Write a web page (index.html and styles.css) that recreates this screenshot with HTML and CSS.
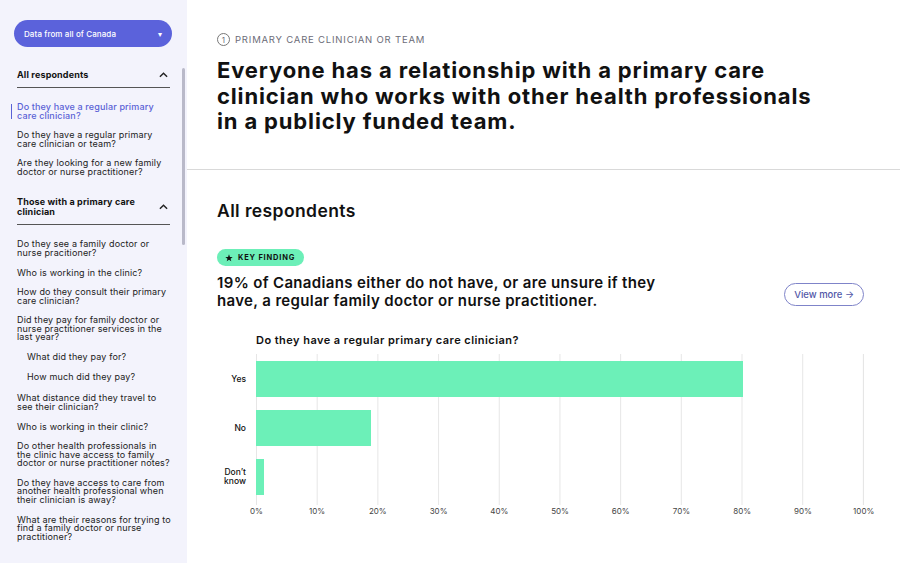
FILE: index.html
```html
<!DOCTYPE html>
<html lang="en">
<head>
    <meta charset="UTF-8">
    <meta name="viewport" content="width=device-width, initial-scale=1.0">
    <title>Primary Care Clinician or Team</title>
    <link rel="stylesheet" href="styles.css">
</head>
<body>
    <div class="layout">
        <aside class="sidebar">
            <button class="region-select">
                <span>Data from all of Canada</span>
                <span class="caret">&#9662;</span>
            </button>

            <nav class="nav">
                <div class="nav-group">
                    <div class="nav-heading">
                        <span>All respondents</span>
                        <svg class="chevron" viewBox="0 0 10 6" width="9" height="6"><path d="M1 5 L5 1 L9 5" fill="none" stroke="#222" stroke-width="1.6"/></svg>
                    </div>
                    <ul>
                        <li class="active">Do they have a regular primary care clinician?</li>
                        <li>Do they have a regular primary care clinician or team?</li>
                        <li>Are they looking for a new family doctor or nurse practitioner?</li>
                    </ul>
                </div>

                <div class="nav-group">
                    <div class="nav-heading">
                        <span>Those with a primary care clinician</span>
                        <svg class="chevron" viewBox="0 0 10 6" width="9" height="6"><path d="M1 5 L5 1 L9 5" fill="none" stroke="#222" stroke-width="1.6"/></svg>
                    </div>
                    <ul>
                        <li>Do they see a family doctor or nurse pracitioner?</li>
                        <li>Who is working in the clinic?</li>
                        <li>How do they consult their primary care clinician?</li>
                        <li>Did they pay for family doctor or nurse practitioner services in the last year?</li>
                        <li class="sub">What did they pay for?</li>
                        <li class="sub last">How much did they pay?</li>
                        <li>What distance did they travel to see their clinician?</li>
                        <li>Who is working in their clinic?</li>
                        <li>Do other health professionals in the clinic have access to family doctor or nurse practitioner notes?</li>
                        <li>Do they have access to care from another health professional when their clinician is away?</li>
                        <li>What are their reasons for trying to find a family doctor or nurse practitioner?</li>
                    </ul>
                </div>
            </nav>
            <div class="scroll-thumb"></div>
        </aside>

        <main class="main">
            <section class="intro">
                <p class="kicker"><span class="step">1</span>PRIMARY CARE CLINICIAN OR TEAM</p>
                <h1>Everyone has a relationship with a primary care clinician who works with other health professionals in a publicly funded team.</h1>
            </section>

            <section class="findings">
                <h2>All respondents</h2>

                <span class="badge">
                    <svg viewBox="0 0 10 10" width="8" height="8"><path d="M5 0.4 L6.2 3.6 L9.6 3.7 L6.9 5.8 L7.9 9.2 L5 7.2 L2.1 9.2 L3.1 5.8 L0.4 3.7 L3.8 3.6 Z" fill="#111"/></svg>
                    KEY FINDING
                </span>

                <div class="finding-row">
                    <p class="finding">19% of Canadians either do not have, or are unsure if they have, a regular family doctor or nurse practitioner.</p>
                    <button class="view-more">View more &#8594;</button>
                </div>

                <div class="chart">
                    <h3>Do they have a regular primary care clinician?</h3>
                    <div class="chart-body">
                        <div class="labels">
                            <span>Yes</span>
                            <span>No</span>
                            <span>Don&rsquo;t<br>know</span>
                        </div>
                        <div class="plot">
                            <div class="bar" style="width: 80.2%"></div>
                            <div class="bar" style="width: 18.9%"></div>
                            <div class="bar" style="width: 1.3%"></div>
                        </div>
                    </div>
                    <div class="axis">
                        <span>0%</span><span>10%</span><span>20%</span><span>30%</span><span>40%</span><span>50%</span>
                        <span>60%</span><span>70%</span><span>80%</span><span>90%</span><span>100%</span>
                    </div>
                </div>
            </section>
        </main>
    </div>
</body>
</html>
```

FILE: styles.css
```css
* {
    box-sizing: border-box;
    margin: 0;
    padding: 0;
}

body {
    font-family: 'Inter', 'Noto Sans', sans-serif;
    color: #111;
    background: #fff;
    overflow: hidden;
}

.layout {
    display: flex;
    height: 563px;
}

/* ---------- sidebar ---------- */
.sidebar {
    position: relative;
    width: 187px;
    flex-shrink: 0;
    background: #f3f3fc;
    padding: 20px 0 0 0;
    overflow: hidden;
}

.region-select {
    display: flex;
    justify-content: space-between;
    align-items: center;
    width: 158px;
    height: 27px;
    margin-left: 14px;
    padding: 0 10px;
    background: #5b62db;
    color: #fff;
    border: none;
    border-radius: 14px;
    font-family: inherit;
    font-size: 8px;
    font-weight: 500;
    letter-spacing: 0.1px;
}

.region-select .caret {
    font-size: 8px;
}

.nav {
    padding: 22px 15px 0 17px;
}

.nav-heading {
    display: flex;
    justify-content: space-between;
    align-items: center;
    font-size: 9px;
    font-weight: 700;
    line-height: 10px;
    letter-spacing: 0.15px;
    padding-bottom: 7px;
    border-bottom: 1px solid #555;
    min-height: 19px;
    margin-right: 2px;
}

.nav-heading span {
    max-width: 125px;
}

.chevron {
    margin-right: 2px;
}

.nav-group ul {
    list-style: none;
    padding: 15px 0 0 0;
}

.nav-group + .nav-group {
    margin-top: 21px;
}

.nav-group li {
    position: relative;
    font-size: 9px;
    line-height: 8.5px;
    margin-bottom: 11.2px;
    color: #222;
    letter-spacing: 0.15px;
}

.nav-group li.sub {
    padding-left: 10px;
}

.nav-group li.sub.last {
    margin-bottom: 13px;
}

.nav-group li.active {
    color: #5a62d6;
    font-weight: 500;
}

.nav-group li.active::before {
    content: "";
    position: absolute;
    left: -6px;
    top: 1px;
    width: 1px;
    height: 15px;
    background: #5a62d6;
}

.scroll-thumb {
    position: absolute;
    left: 182px;
    top: 68px;
    width: 3px;
    height: 177px;
    border-radius: 2px;
    background: #b9b9c9;
}

/* ---------- main ---------- */
.main {
    flex: 1;
    min-width: 0;
}

.intro {
    padding: 33px 30px 0 30px;
    height: 170px;
    border-bottom: 1px solid #d9d9d9;
}

.kicker {
    display: flex;
    align-items: center;
    gap: 5px;
    font-size: 9.5px;
    letter-spacing: 0.8px;
    color: #6c6c78;
}

.step {
    display: inline-flex;
    justify-content: center;
    align-items: center;
    width: 13px;
    height: 13px;
    border: 1px solid #777;
    border-radius: 50%;
    font-size: 8px;
    letter-spacing: 0;
}

h1 {
    margin-top: 12px;
    max-width: 600px;
    font-size: 22px;
    line-height: 25.5px;
    font-weight: 700;
    letter-spacing: 0.85px;
}

.findings {
    padding: 30px 36px 0 30px;
}

h2 {
    font-size: 17.5px;
    font-weight: 600;
    line-height: 22px;
    letter-spacing: 0.4px;
}

.badge {
    display: inline-flex;
    align-items: center;
    gap: 5px;
    margin-top: 27px;
    height: 17px;
    padding: 0 9px 0 8px;
    background: #6cefb8;
    border-radius: 9px;
    font-size: 7.5px;
    font-weight: 700;
    letter-spacing: 0.8px;
}

.finding-row {
    display: flex;
    justify-content: space-between;
    align-items: flex-start;
    margin-top: 8px;
}

.finding {
    max-width: 470px;
    font-size: 15px;
    font-weight: 600;
    line-height: 18px;
    letter-spacing: 0.35px;
}

.view-more {
    margin-top: 9px;
    height: 23px;
    padding: 0 9px;
    background: #fff;
    color: #5258a8;
    border: 1px solid #7f84c9;
    border-radius: 12px;
    font-family: inherit;
    font-size: 9.5px;
    font-weight: 500;
}

.chart {
    margin-top: 23px;
}

.chart h3 {
    margin-left: 39px;
    font-size: 11px;
    font-weight: 600;
    line-height: 14px;
    letter-spacing: 0.45px;
}

.chart-body {
    display: flex;
    margin-top: 7px;
}

.labels {
    width: 39px;
    display: flex;
    flex-direction: column;
    gap: 13px;
    padding: 7px 10px 0 0;
    font-size: 8.5px;
    line-height: 9px;
    text-align: right;
    font-weight: 500;
}

.labels span {
    height: 36px;
    display: flex;
    align-items: center;
    justify-content: flex-end;
}

.plot {
    flex: 1;
    padding: 7px 0 10px 0;
    display: flex;
    flex-direction: column;
    gap: 13px;
    background-image: linear-gradient(to right, #e6e6e6 1px, transparent 1px);
    background-size: 10% 100%;
    border-right: 1px solid #e6e6e6;
}

.bar {
    height: 36px;
    background: #6cf0b8;
}

.axis {
    display: flex;
    margin-left: calc(39px - 30px);
    width: calc(100% - 39px + 60px);
    margin-top: 1px;
    font-size: 8px;
    color: #444;
}

.axis span {
    flex: 1;
    text-align: center;
}
```
